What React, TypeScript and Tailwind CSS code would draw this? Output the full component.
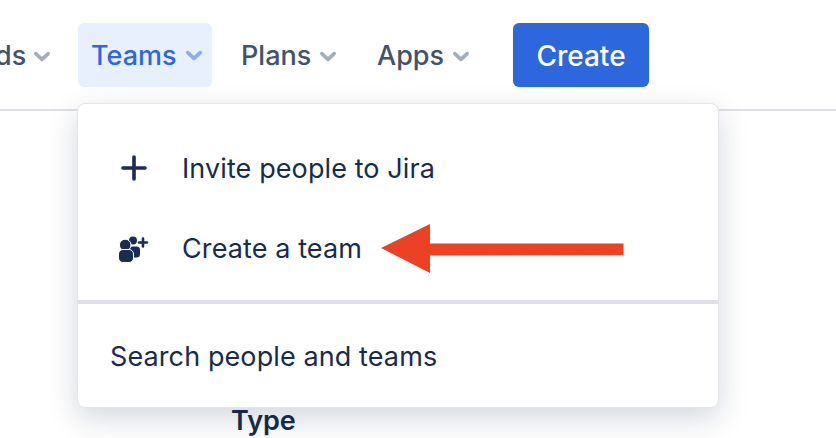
import React from "react";

const Chevron = ({ className }: { className: string }) => (
  <svg width="20" height="20" viewBox="0 0 20 20" className={className} fill="none">
    <path d="M3.8 7.6 L10 13.4 L16.2 7.6" stroke="currentColor" strokeWidth="3.6" strokeLinecap="round" strokeLinejoin="round" />
  </svg>
);

const navText = "text-[27px] font-medium pt-[2px]";

export default function App() {
  return (
    <div className="relative w-[836px] h-[438px] overflow-hidden bg-white font-['Inter',sans-serif]">
      <header className="h-[111px] border-b-2 border-[#dfe1e6] pt-[23px] flex items-start">
        <div className="flex items-center h-[64px] ml-[-129px]">
          <div className={`flex items-center gap-[6px] w-[207px] text-[#42526e] ${navText}`}>
            <span className="whitespace-nowrap">Dashboards</span>
            <Chevron className="text-[#a5adba] shrink-0" />
          </div>
          <div className="flex items-center gap-[7px] w-[134px] h-[64px] pl-[13px] rounded-[6px] bg-[#e9f0fd] text-[#2d67dd]">
            <span className={navText}>Teams</span>
            <Chevron className="text-[#8cabf0] shrink-0" />
          </div>
          <div className={`flex items-center gap-[7px] ml-[29px] w-[136px] text-[#42526e] ${navText}`}>
            <span>Plans</span>
            <Chevron className="text-[#a5adba] shrink-0" />
          </div>
          <div className={`flex items-center gap-[7px] w-[136px] text-[#42526e] ${navText}`}>
            <span>Apps</span>
            <Chevron className="text-[#a5adba] shrink-0" />
          </div>
          <button className="w-[136px] h-[64px] rounded-[6px] bg-[#2d67dd] text-white text-[28px] font-medium pt-[2px]">Create</button>
        </div>
      </header>
      <main className="pl-[231px] pt-[294px]">
        <div className="text-[27px] font-semibold text-[#172b4d] leading-[32px]">Type</div>
      </main>

      <div className="absolute left-[77px] top-[103px] w-[642px] h-[305px] rounded-[8px] bg-white border border-[#e4e5ea] shadow-[0_10px_30px_rgba(9,30,66,0.18)] text-[27px] text-[#172b4d] tracking-[0.1px]">
        <div className="h-[196px] pt-[24px]">
          <div className="flex items-center h-[80px] pl-[41px]">
            <svg width="30" height="30" viewBox="0 0 30 30" className="shrink-0">
              <path d="M15 4 V26 M4 15 H26" stroke="#1c2b50" strokeWidth="3.6" strokeLinecap="round" />
            </svg>
            <span className="ml-[33px] pt-[2px]">Invite people to Jira</span>
          </div>
          <div className="flex items-center h-[80px] pl-[41px]">
            <svg width="30" height="30" viewBox="0 0 30 30" className="shrink-0">
              <circle cx="14" cy="7.500" r="4" fill="#1c2b50" />
              <rect x="10" y="13.500" width="11" height="11" rx="3.500" fill="#1c2b50" />
              <circle cx="6.200" cy="12" r="5.800" fill="#1c2b50" stroke="#ffffff" strokeWidth="1" />
              <rect x="-0.500" y="16.500" width="15" height="13" rx="4.500" fill="#1c2b50" stroke="#ffffff" strokeWidth="1" />
              <path d="M24 5.500 V13.500 M20 9.500 H28" stroke="#1c2b50" strokeWidth="2.600" strokeLinecap="round" />
            </svg>
            <span className="ml-[33px] pt-[2px]">Create a team</span>
          </div>
        </div>
        <div className="h-[4px] bg-[#dfe1e6]" />
        <div className="pl-[32px] pt-[37px] leading-[32px]">Search people and teams</div>
      </div>

      <svg width="250" height="56" viewBox="0 0 250 56" className="absolute left-[380px] top-[223px]">
        <path d="M243.500 20.500 V32 L50 32.500 V50 L1 25 L50 1 V20.500 Z" fill="#ec4125" />
      </svg>
    </div>
  );
}
